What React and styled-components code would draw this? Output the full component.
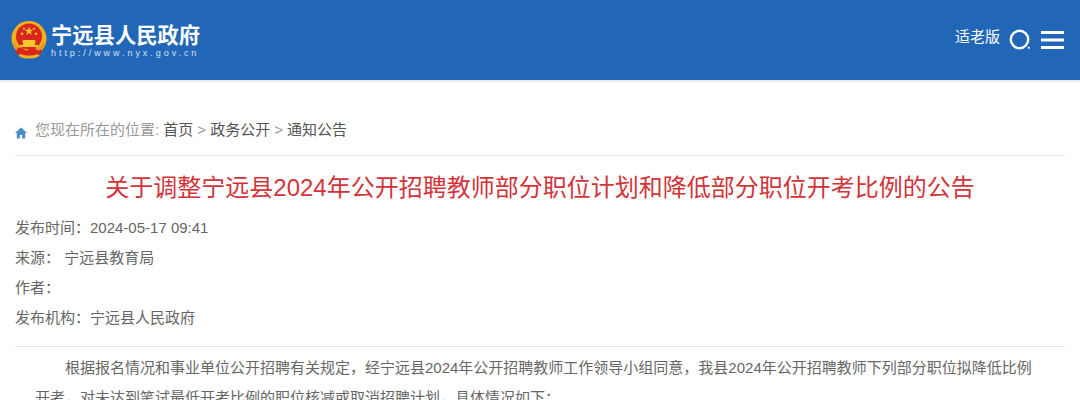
import React from "react";
import styled, { createGlobalStyle } from "styled-components";

const GlobalStyle = createGlobalStyle`
    html, body {
        margin: 0;
        padding: 0;
        background: #fff;
        overflow: hidden;
    }
    body {
        font-family: "Liberation Sans", "Noto Sans CJK SC", sans-serif;
    }
`;

const Header = styled.header`
    height: 80px;
    background-color: #2266b8;
    box-shadow: 0 1px 3px rgba(0, 0, 0, 0.15);
    display: flex;
    justify-content: space-between;
    padding: 0 15px 0 10px;
`;

const Logo = styled.div`
    display: flex;
    align-items: center;
    gap: 3px;
    height: 80px;
`;

const LogoText = styled.div`
    color: #fff;
    padding-top: 2px;
`;

const SiteName = styled.div`
    font-size: 21.3px;
    font-weight: 700;
    line-height: 24px;
    white-space: nowrap;
`;

const SiteUrl = styled.div`
    font-size: 9px;
    line-height: 11px;
    letter-spacing: 2.95px;
    color: #d5e2f2;
    white-space: nowrap;
`;

const Tools = styled.div`
    display: flex;
    align-items: flex-start;
    padding-top: 28px;
`;

const OldVersion = styled.span`
    color: #fff;
    font-size: 15px;
    line-height: 18px;
    margin-right: 9px;
`;

const IconButton = styled.span`
    display: block;
    height: 22px;
    margin-left: ${(props) => props.$gap || 0}px;
`;

const Main = styled.main`
    padding: 0 15px;
`;

const Crumbs = styled.nav`
    height: 76px;
    box-sizing: border-box;
    padding-top: 40px;
    border-bottom: 1px solid #e5e5e5;
    display: flex;
    align-items: flex-start;
    font-size: 15px;
    line-height: 20px;
    color: #999;
    white-space: pre;
`;

const HomeIcon = styled.svg`
    width: 12px;
    height: 12px;
    margin: 7px 8px 0 0;
    flex: none;
`;

const CrumbLink = styled.span`
    color: #555;
`;

const Sep = styled.span`
    color: #999;
    margin: 0 4px;
`;

const Title = styled.h1`
    margin: 0;
    padding-top: 17px;
    font-size: 24px;
    line-height: 30px;
    font-weight: 400;
    color: #d2343a;
    text-align: center;
`;

const MetaList = styled.div`
    margin-top: 10px;
    padding-bottom: 13px;
    border-bottom: 1px solid #e5e5e5;
`;

const MetaRow = styled.div`
    height: 30px;
    line-height: 30px;
    font-size: 15px;
    color: #666;
    white-space: pre;
`;

const Article = styled.article`
    padding: 6px 20px 0;
    font-size: 15px;
    line-height: 30px;
    color: #666;
`;

const Paragraph = styled.p`
    margin: 0;
    text-indent: 30px;
`;

const Emblem = () => (
    <svg width="38" height="38" viewBox="0 0 38 38">
        <circle cx="19" cy="17.500" r="17.500" fill="#f2b01e" />
        <circle cx="19" cy="15.500" r="13" fill="#d8261c" />
        <path d="M19 5.500l1.100 3.200h3.400l-2.800 2 1.100 3.200-2.800-2-2.800 2 1.100-3.200-2.800-2h3.400z" fill="#f6c62d" />
        <path d="M12 10.500l.5 1.500h1.500l-1.200.9.500 1.500-1.300-.9-1.300.9.500-1.500-1.200-.9h1.500zM26 10.500l.5 1.500h1.500l-1.200.9.500 1.500-1.300-.9-1.300.9.500-1.500-1.200-.9h1.500z" fill="#f6c62d" />
        <path d="M14 6l.4 1.100h1.100l-.9.700.3 1.100-.9-.7-.9.700.3-1.100-.9-.7h1.100zM24 6l.4 1.100h1.100l-.9.700.3 1.100-.9-.7-.9.700.3-1.100-.9-.7h1.100z" fill="#f6c62d" />
        <path d="M10 26v-2h3v-3h-1.500l2-2h11l2 2H25v3h3v2z" fill="#f6c62d" />
        <path d="M2 21c2 7 8 11 17 11s15-4 17-11l-3 1c-2 4-7 6-14 6s-12-2-14-6z" fill="#e99a1c" />
        <path d="M7 28c2-2 5-2 7 0s3 2 5 0 5-2 7 0 3 2 5 0l1 3c-2 3-5 4-13 4S8 34 5 31z" fill="#d8261c" />
        <path d="M8 34.500c3 2.500 7 3 11 3s8-.5 11-3l-3-1.500c-2 1-5 1.500-8 1.500s-6-.5-8-1.500z" fill="#f2b01e" />
    </svg>
);

const App = () => (
    <>
        <GlobalStyle />
        <Header>
            <Logo>
                <Emblem />
                <LogoText>
                    <SiteName>宁远县人民政府</SiteName>
                    <SiteUrl>http://www.nyx.gov.cn</SiteUrl>
                </LogoText>
            </Logo>
            <Tools>
                <OldVersion>适老版</OldVersion>
                <IconButton>
                    <svg width="22" height="22" viewBox="0 0 22 22" fill="none">
                        <circle cx="10.500" cy="11.500" r="8.700" stroke="#fff" strokeWidth="2.400" />
                        <circle cx="19.800" cy="19.800" r="1.100" fill="#fff" />
                    </svg>
                </IconButton>
                <IconButton $gap={10}>
                    <svg width="24" height="22" viewBox="0 0 24 22" fill="#fff">
                        <rect x="0" y="3" width="23" height="3" />
                        <rect x="0" y="10.500" width="23" height="3" />
                        <rect x="0" y="18" width="23" height="3" />
                    </svg>
                </IconButton>
            </Tools>
        </Header>
        <Main>
            <Crumbs>
                <HomeIcon viewBox="0 0 12 12">
                    <path d="M6 .5L0 6h1.800v5.500h3V8h2.400v3.500h3V6H12z" fill="#4a8cc4" />
                </HomeIcon>
                {"您现在所在的位置: "}
                <CrumbLink>首页</CrumbLink>
                <Sep>&gt;</Sep>
                <CrumbLink>政务公开</CrumbLink>
                <Sep>&gt;</Sep>
                <CrumbLink>通知公告</CrumbLink>
            </Crumbs>
            <Title>关于调整宁远县2024年公开招聘教师部分职位计划和降低部分职位开考比例的公告</Title>
            <MetaList>
                <MetaRow>{"发布时间\uFF1A2024-05-17 09:41"}</MetaRow>
                <MetaRow>{"来源\uFF1A 宁远县教育局"}</MetaRow>
                <MetaRow>{"作者\uFF1A"}</MetaRow>
                <MetaRow>{"发布机构\uFF1A宁远县人民政府"}</MetaRow>
            </MetaList>
            <Article>
                <Paragraph>{"根据报名情况和事业单位公开招聘有关规定\uFF0C经宁远县2024年公开招聘教师工作领导小组同意\uFF0C我县2024年公开招聘教师下列部分职位拟降低比例开考\uFF0C对未达到笔试最低开考比例的职位核减或取消招聘计划\uFF0C具体情况如下\uFF1A"}</Paragraph>
            </Article>
        </Main>
    </>
);

export default App;
